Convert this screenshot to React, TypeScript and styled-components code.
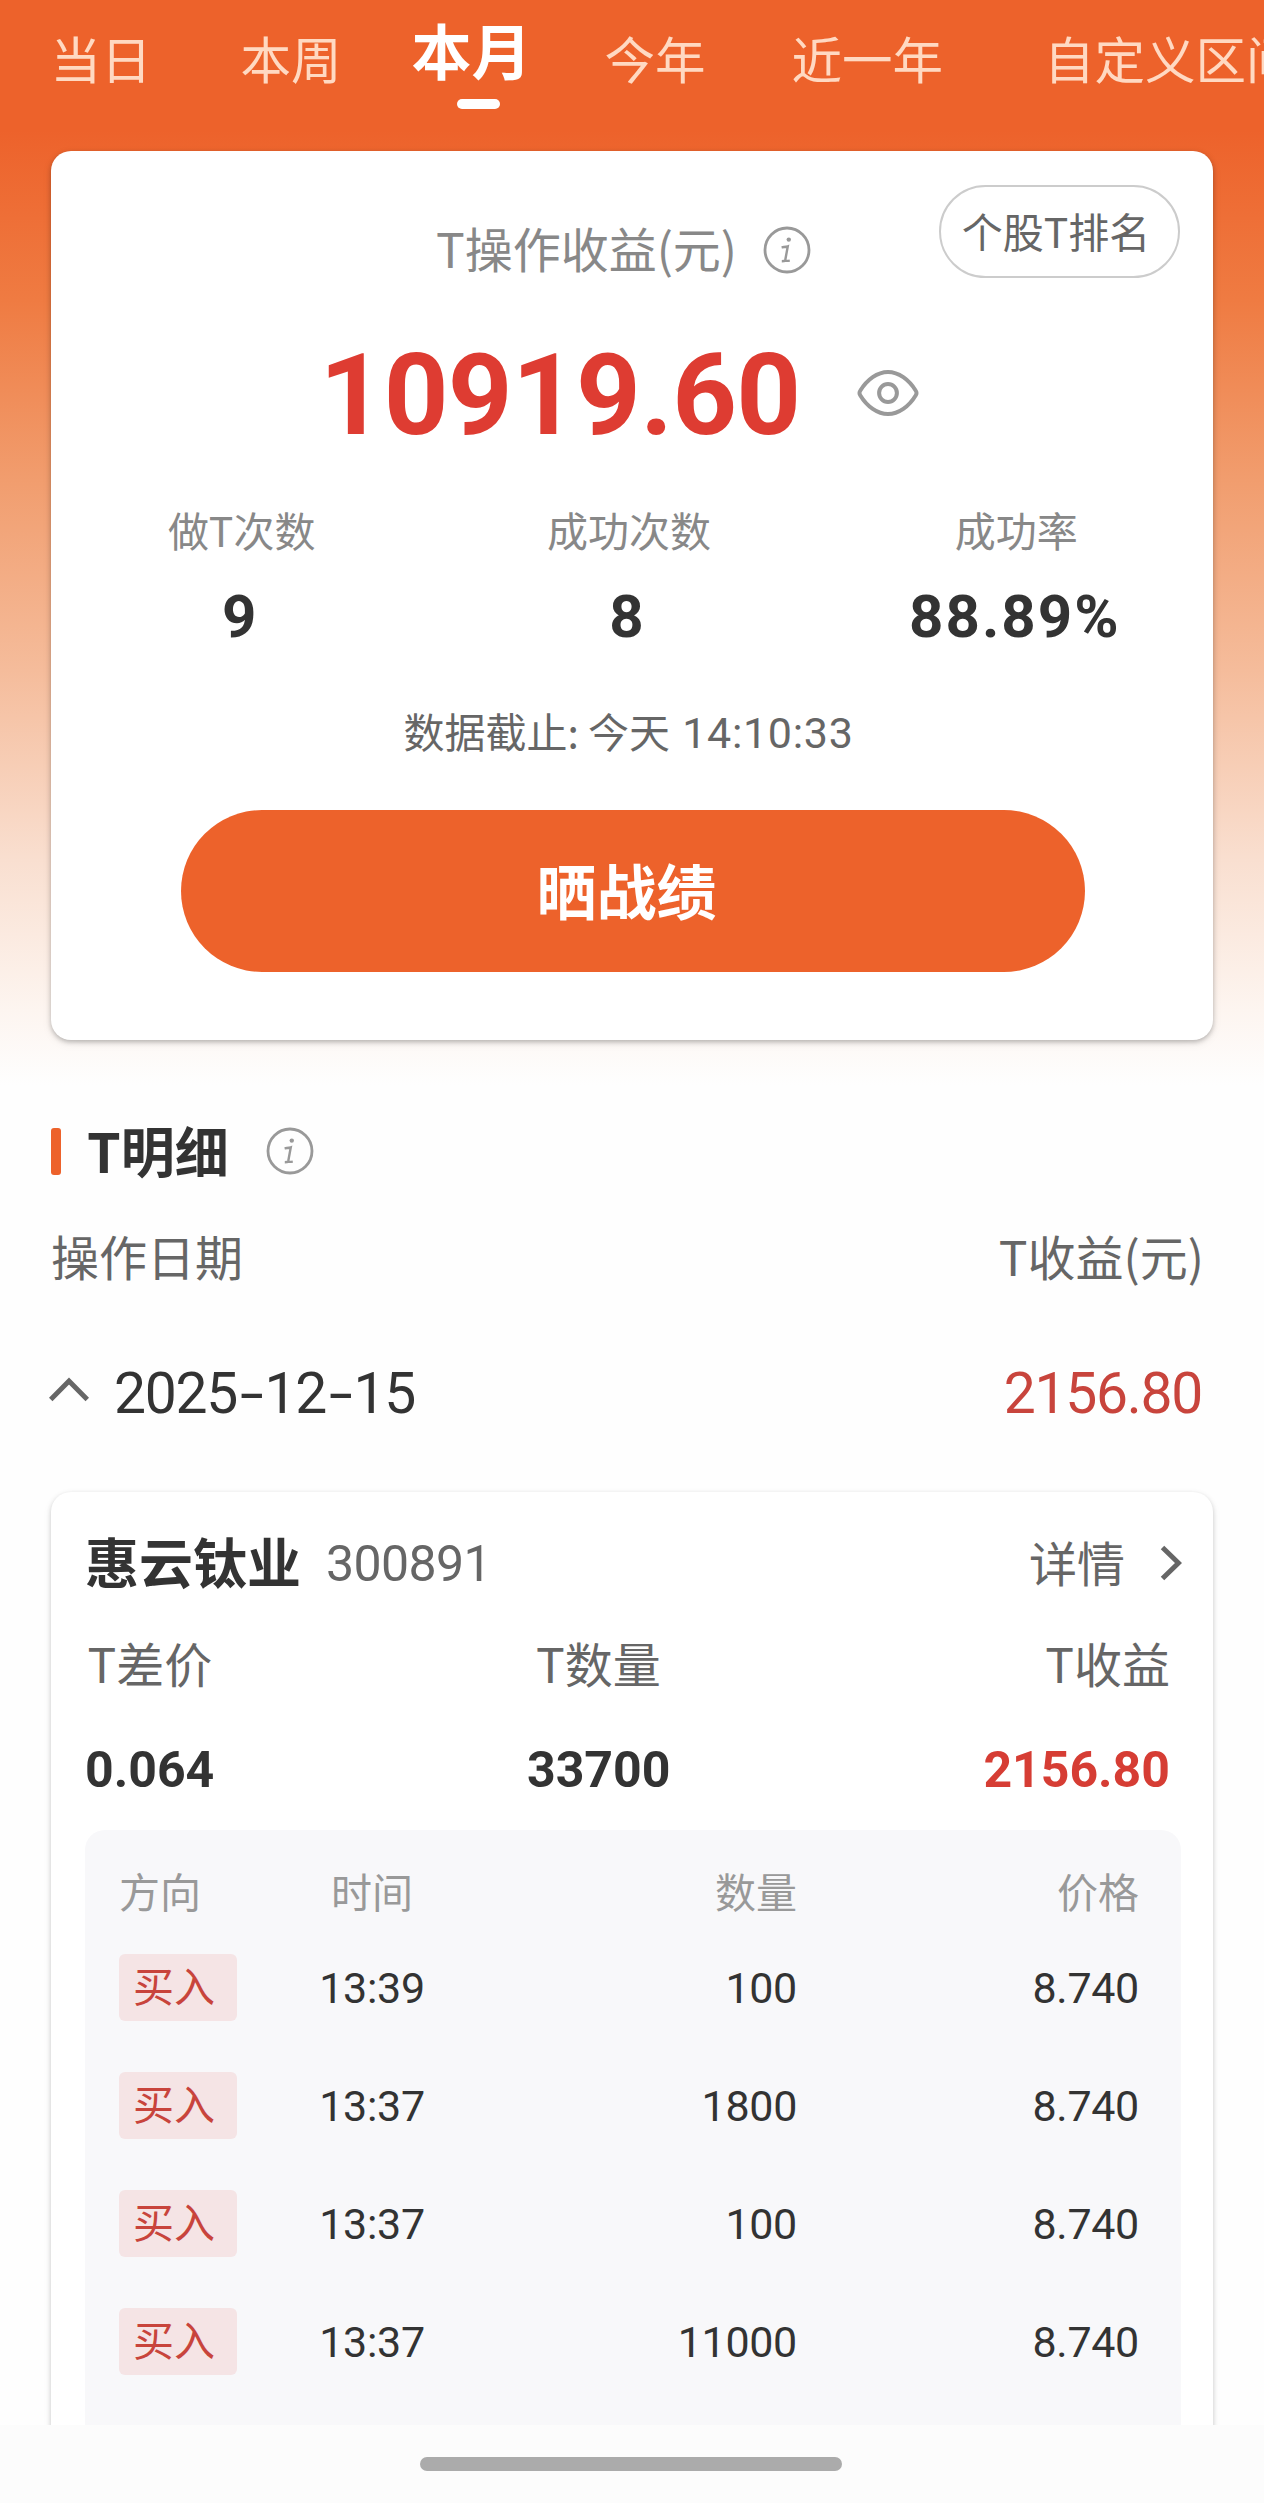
import React from "react";
import styled, { createGlobalStyle } from "styled-components";

const cjk = '"Noto Sans CJK SC", sans-serif';
const digits = 'Roboto, "Noto Sans CJK SC", sans-serif';

const GlobalStyle = createGlobalStyle`
  *, *::before, *::after { box-sizing: border-box; }
  body { margin: 0; background: #fefefe; font-family: ${cjk}; color: #333; }
  button { font: inherit; border: 0; padding: 0; background: none; color: inherit; cursor: pointer; }
`;

const Page = styled.div`
  display: flex;
  flex-direction: column;
  width: 1264px;
  height: 2503px;
  overflow: hidden;
`;

const Content = styled.main`
  flex: none;
  height: 2425px;
  overflow: hidden;
  background: linear-gradient(
      180deg,
      #ed622b 0,
      #ed622b 130px,
      #ef7b42 300px,
      #f19d6e 480px,
      #f5bc9b 670px,
      #f9dfd0 860px,
      #fdf5f0 1010px,
      #fefefe 1085px
    )
    #fefefe;
`;

const Tabs = styled.nav`
  display: flex;
  align-items: flex-start;
  height: 151px;
  padding-left: 50.5px;
`;

const Tab = styled.button<{ $active?: boolean; $lead: number }>`
  display: flex;
  flex: none;
  flex-direction: column;
  align-items: center;
  gap: 20px;
  margin-left: ${(p) => p.$lead}px;
  padding-top: ${(p) => (p.$active ? 19 : 32)}px;
  font-size: ${(p) => (p.$active ? 60 : 50.5)}px;
  line-height: 1;
  font-weight: ${(p) => (p.$active ? 700 : 400)};
  color: ${(p) => (p.$active ? "#fff" : "#ffd9c2")};
  white-space: nowrap;
`;

const TabMark = styled.span`
  width: 43px;
  height: 10px;
  margin-left: 14px;
  border-radius: 5px;
  background: #fff;
`;

const Card = styled.section`
  margin: 0 51px;
  border-radius: 20px;
  background: #fff;
  box-shadow: 0 2px 5px rgba(0, 0, 0, 0.26), 0 3px 12px rgba(0, 0, 0, 0.06);
`;

const Summary = styled(Card)`
  position: relative;
  height: 889px;
  padding-top: 72px;
`;

const RankPill = styled.button`
  position: absolute;
  top: 34px;
  right: 33px;
  width: 241px;
  height: 93px;
  padding: 0 7px 3px 0;
  border: 2px solid #ccc;
  border-radius: 47px;
  font-size: 41px;
  line-height: 1;
  color: #666;
`;

const SummaryTitle = styled.div`
  display: flex;
  justify-content: center;
  align-items: center;
  gap: 26px;
  height: 48px;
  padding-right: 17px;
  font-size: 48px;
  line-height: 48px;
  color: #888;
  svg { margin-top: 6px; }
`;

const TotalRow = styled.div`
  display: flex;
  justify-content: center;
  align-items: center;
  gap: 56px;
  height: 112px;
  margin-top: 69px;
  padding-right: 26px;
  svg { margin-bottom: 6px; }
`;

const Total = styled.strong`
  font: 700 113px/112px ${digits};
  letter-spacing: -0.7px;
  color: #de3c32;
`;

const Stats = styled.div`
  display: grid;
  grid-template-columns: repeat(3, 1fr);
  margin: 57px 3px 0 -3px;
  text-align: center;
`;

const StatLabel = styled.div`
  font-size: 41px;
  line-height: 41px;
  color: #888;
`;

const StatValue = styled.div`
  margin-top: 37px;
  padding-right: 3px;
  font: 700 60px/60px ${digits};
  letter-spacing: 2px;
  color: #333;
`;

const Deadline = styled.div`
  height: 41px;
  margin-top: 63px;
  padding-right: 7px;
  font-size: 41px;
  line-height: 41px;
  text-align: center;
  color: #666;
`;

const Clock = styled.span`
  margin-left: 3px;
  font-family: ${digits};
  font-size: 43px;
  line-height: 0;
  letter-spacing: 0.7px;
`;

const ShareButton = styled.button`
  display: block;
  width: 904px;
  height: 162px;
  margin: 59px 128px 0 130px;
  padding: 0 13px 4px 0;
  border-radius: 81px;
  background: #ed622b;
  font-size: 60px;
  line-height: 60px;
  font-weight: 700;
  color: #fff;
`;

const SectionTitle = styled.h2`
  display: flex;
  align-items: center;
  height: 54px;
  margin: 84px 51px 0;
  font-size: 54px;
  line-height: 54px;
  font-weight: 700;
  color: #333;
  &::before {
    content: "";
    width: 10px;
    height: 47px;
    margin-right: 26px;
    border-radius: 3px;
    background: #ed622b;
  }
`;

const SectionText = styled.span`
  margin: -3px 37px 0 0;
`;

const Columns = styled.div`
  display: flex;
  justify-content: space-between;
  margin: 53px 60px 0 51px;
  font-size: 48px;
  line-height: 48px;
  color: #666;
`;

const DayRow = styled.div`
  display: flex;
  align-items: center;
  height: 57px;
  margin: 86px 62px 70px 49px;
  font: 400 57px/57px ${digits};
  letter-spacing: -1.3px;
  svg { margin-bottom: 7px; }
`;

const DayDate = styled.span`
  flex: 1;
  margin-left: 25px;
`;

const Dash = styled.span`
  display: inline-block;
  width: 27.5px;
  text-align: center;
  transform: scaleX(1.5);
`;

const DayProfit = styled.span`
  color: #c8443c;
`;

const StockCard = styled(Card)`
  height: 1100px;
  padding: 42px 31px 0 34px;
  box-shadow: 0 2px 5px rgba(0, 0, 0, 0.2), 0 3px 12px rgba(0, 0, 0, 0.04);
`;

const StockHead = styled.div`
  display: flex;
  align-items: center;
  height: 54px;
`;

const StockName = styled.strong`
  font-size: 54px;
  line-height: 54px;
`;

const StockCode = styled.span`
  flex: 1;
  margin: 5px 0 0 25px;
  font: 400 50px/54px ${digits};
  letter-spacing: -0.6px;
  color: #666;
`;

const DetailLink = styled.button`
  display: flex;
  align-items: center;
  gap: 35px;
  font-size: 48px;
  line-height: 48px;
  color: #666;
  svg { margin-top: 4px; }
`;

const Figures = styled.div`
  display: grid;
  grid-template-columns: 441px 143px 1fr;
  row-gap: 58px;
  margin: 50px 12px 0 1px;
`;

const FigureLabel = styled.div<{ $align: string }>`
  padding-left: ${(p) => (p.$align === "left" ? 1.5 : 0)}px;
  font-size: 48px;
  line-height: 48px;
  text-align: ${(p) => p.$align};
  color: #666;
`;

const FigureValue = styled.div<{ $align: string; $red?: boolean }>`
  margin-left: ${(p) => (p.$align === "left" ? -1 : 0)}px;
  font: 700 50px/52px ${digits};
  text-align: ${(p) => p.$align};
  color: ${(p) => (p.$red ? "#d63d34" : "#333")};
`;

const Trades = styled.div`
  display: flex;
  flex-direction: column;
  gap: 51px;
  height: 1000px;
  margin-top: 34px;
  margin-right: 1px;
  padding: 40px 42px 0 34px;
  border-radius: 20px;
  background: #f8f8fa;
`;

const TradeRow = styled.div<{ $head?: boolean }>`
  display: grid;
  grid-template-columns: 200px 106px 1fr 342px;
  align-items: center;
  height: ${(p) => (p.$head ? 41 : 67)}px;
  margin-bottom: ${(p) => (p.$head ? -8.5 : 0)}px;
  font: 400 ${(p) => (p.$head ? `41px/41px ${cjk}` : `43px/43px ${digits}`)};
  letter-spacing: ${(p) => (p.$head ? 0 : -0.3)}px;
  color: ${(p) => (p.$head ? "#999" : "#333")};
`;

const Cell = styled.span<{ $align?: string; $number?: boolean }>`
  padding-top: ${(p) => (p.$number ? 3 : 0)}px;
  text-align: ${(p) => p.$align ?? "left"};
`;

const Badge = styled.span`
  display: flex;
  align-items: center;
  width: 118px;
  height: 67px;
  padding: 0 0 6px 14px;
  border-radius: 6px;
  background: #f5e4e5;
  font: 400 41px/41px ${cjk};
  letter-spacing: 0;
  color: #c8443c;
`;

const HomeBar = styled.footer`
  display: flex;
  justify-content: center;
  align-items: flex-start;
  flex: none;
  height: 78px;
  padding: 32px 2px 0 0;
  background: #fcfcfc;
  &::before {
    content: "";
    width: 422px;
    height: 14px;
    border-radius: 7px;
    background: #ababab;
  }
`;

const InfoIcon = () => (
  <svg width="48" height="48" viewBox="0 0 48 48" fill="none" stroke="#999">
    <circle cx="24" cy="24" r="22" strokeWidth="2.8" />
    <circle cx="25.8" cy="13.6" r="2.2" fill="#999" stroke="none" />
    <path
      d="M18.600 21.400C20.800 21 22.800 20.900 24.800 20.300L22.400 33.200C22.200 35 22.600 35.300 26.800 34.600M18.800 35.200C20.400 35.200 22 34.900 23.600 34.400"
      strokeWidth="2.400"
    />
  </svg>
);

const EyeIcon = () => (
  <svg width="62" height="48" viewBox="0 0 62 48" fill="none" stroke="#999" strokeWidth="4">
    <path
      d="M3.2 26.2Q1.8 24 3.2 21.8C10 10.500 20.500 3 31 3S52 10.500 58.800 21.800Q60.200 24 58.800 26.200C52 37.500 41.500 45 31 45S10 37.500 3.200 26.200Z"
      strokeLinejoin="round"
    />
    <circle cx="31" cy="24" r="8.900" />
  </svg>
);

const ChevronUp = () => (
  <svg width="40" height="26" viewBox="0 0 40 26" fill="none" stroke="#666" strokeWidth="5">
    <path d="M1.700 22.500L20 4L38.300 22.500" />
  </svg>
);

const ChevronRight = () => (
  <svg width="22" height="36" viewBox="0 0 22 36" fill="none" stroke="#666" strokeWidth="5">
    <path d="M2.500 2.500L18.500 18L2.500 33.500" />
  </svg>
);

const tabs = [
  { label: "当日", lead: 0 },
  { label: "本周", lead: 89 },
  { label: "本月", lead: 70, active: true },
  { label: "今年", lead: 73 },
  { label: "近一年", lead: 86 },
  { label: "自定义区间", lead: 101 },
];

const stats = [
  { label: "做T次数", value: "9" },
  { label: "成功次数", value: "8" },
  { label: "成功率", value: "88.89%" },
];

const trades = [
  { side: "买入", time: "13:39", amount: "100", price: "8.740" },
  { side: "买入", time: "13:37", amount: "1800", price: "8.740" },
  { side: "买入", time: "13:37", amount: "100", price: "8.740" },
  { side: "买入", time: "13:37", amount: "11000", price: "8.740" },
];

export default function App() {
  return (
    <Page>
      <GlobalStyle />
      <Content>
        <Tabs>
          {tabs.map((t) => (
            <Tab key={t.label} $lead={t.lead} $active={t.active}>
              {t.label}
              {t.active && <TabMark />}
            </Tab>
          ))}
        </Tabs>

        <Summary>
          <RankPill>个股T排名</RankPill>
          <SummaryTitle>
            <span>T操作收益(元)</span>
            <InfoIcon />
          </SummaryTitle>
          <TotalRow>
            <Total>10919.60</Total>
            <EyeIcon />
          </TotalRow>
          <Stats>
            {stats.map((s) => (
              <div key={s.label}>
                <StatLabel>{s.label}</StatLabel>
                <StatValue>{s.value}</StatValue>
              </div>
            ))}
          </Stats>
          <Deadline>
            数据截止: 今天 <Clock>14:10:33</Clock>
          </Deadline>
          <ShareButton>晒战绩</ShareButton>
        </Summary>

        <SectionTitle>
          <SectionText>T明细</SectionText>
          <InfoIcon />
        </SectionTitle>
        <Columns>
          <span>操作日期</span>
          <span>T收益(元)</span>
        </Columns>
        <DayRow>
          <ChevronUp />
          <DayDate>
            2025<Dash>-</Dash>12<Dash>-</Dash>15
          </DayDate>
          <DayProfit>2156.80</DayProfit>
        </DayRow>

        <StockCard>
          <StockHead>
            <StockName>惠云钛业</StockName>
            <StockCode>300891</StockCode>
            <DetailLink>
              详情
              <ChevronRight />
            </DetailLink>
          </StockHead>
          <Figures>
            <FigureLabel $align="left">T差价</FigureLabel>
            <FigureLabel $align="center">T数量</FigureLabel>
            <FigureLabel $align="right">T收益</FigureLabel>
            <FigureValue $align="left">0.064</FigureValue>
            <FigureValue $align="center">33700</FigureValue>
            <FigureValue $align="right" $red>2156.80</FigureValue>
          </Figures>
          <Trades>
            <TradeRow $head>
              <Cell>方向</Cell>
              <Cell $align="center">时间</Cell>
              <Cell $align="right">数量</Cell>
              <Cell $align="right">价格</Cell>
            </TradeRow>
            {trades.map((t, i) => (
              <TradeRow key={i}>
                <Badge>{t.side}</Badge>
                <Cell $number $align="center">{t.time}</Cell>
                <Cell $number $align="right">{t.amount}</Cell>
                <Cell $number $align="right">{t.price}</Cell>
              </TradeRow>
            ))}
          </Trades>
        </StockCard>
      </Content>
      <HomeBar />
    </Page>
  );
}
